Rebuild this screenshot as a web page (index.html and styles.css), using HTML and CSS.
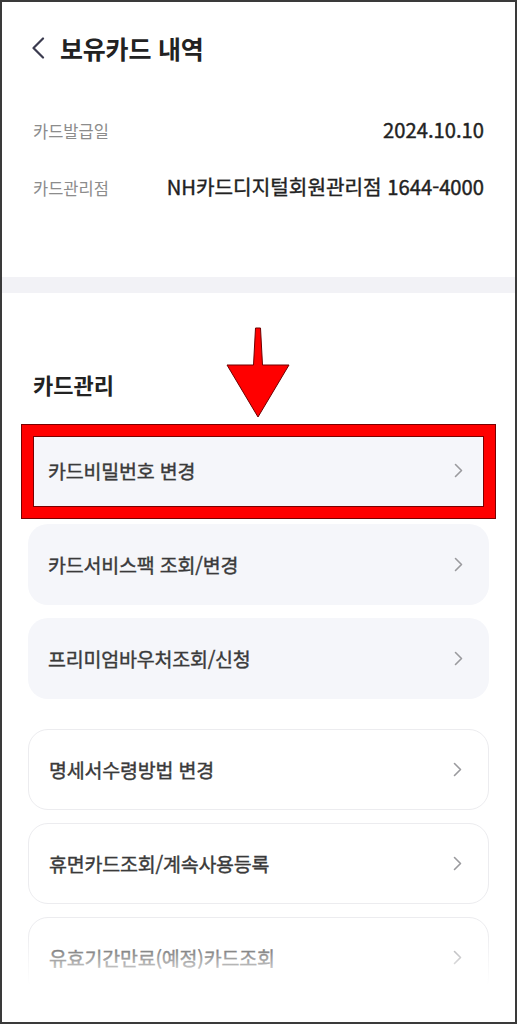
FILE: index.html
```html
<!DOCTYPE html>
<html lang="ko">
<head>
<meta charset="utf-8">
<title>보유카드 내역</title>
<link rel="stylesheet" href="styles.css">
</head>
<body>
<div class="frame">
  <header class="header">
    <svg class="back" width="14" height="22" viewBox="0 0 14 22"><polyline points="12,1.5 2.5,11 12,20.5" fill="none" stroke="#3b3b4f" stroke-width="2.2" stroke-linecap="round" stroke-linejoin="round"/></svg>
    <h1 class="title">보유카드 내역</h1>
  </header>

  <section class="info">
    <div class="info-row"><span class="label">카드발급일</span><span class="value">2024.10.10</span></div>
    <div class="info-row"><span class="label">카드관리점</span><span class="value">NH카드디지털회원관리점 1644-4000</span></div>
  </section>

  <div class="band"></div>

  <section class="manage">
    <h2 class="section-title">카드관리</h2>
    <div class="list">
      <div class="group">
        <div class="item filled highlighted"><span>카드비밀번호 변경</span><svg class="chev" width="9" height="15" viewBox="0 0 9 15"><polyline points="1.5,1.5 7.5,7.5 1.5,13.5" fill="none" stroke="#9a9a9e" stroke-width="1.6" stroke-linecap="round" stroke-linejoin="round"/></svg><div class="redbox"></div></div>
        <div class="item filled"><span>카드서비스팩 조회/변경</span><svg class="chev" width="9" height="15" viewBox="0 0 9 15"><polyline points="1.5,1.5 7.5,7.5 1.5,13.5" fill="none" stroke="#9a9a9e" stroke-width="1.6" stroke-linecap="round" stroke-linejoin="round"/></svg></div>
        <div class="item filled"><span>프리미엄바우처조회/신청</span><svg class="chev" width="9" height="15" viewBox="0 0 9 15"><polyline points="1.5,1.5 7.5,7.5 1.5,13.5" fill="none" stroke="#9a9a9e" stroke-width="1.6" stroke-linecap="round" stroke-linejoin="round"/></svg></div>
      </div>
      <div class="group">
        <div class="item outlined"><span>명세서수령방법 변경</span><svg class="chev" width="9" height="15" viewBox="0 0 9 15"><polyline points="1.5,1.5 7.5,7.5 1.5,13.5" fill="none" stroke="#9a9a9e" stroke-width="1.6" stroke-linecap="round" stroke-linejoin="round"/></svg></div>
        <div class="item outlined"><span>휴면카드조회/계속사용등록</span><svg class="chev" width="9" height="15" viewBox="0 0 9 15"><polyline points="1.5,1.5 7.5,7.5 1.5,13.5" fill="none" stroke="#9a9a9e" stroke-width="1.6" stroke-linecap="round" stroke-linejoin="round"/></svg></div>
        <div class="item outlined"><span>유효기간만료(예정)카드조회</span><svg class="chev" width="9" height="15" viewBox="0 0 9 15"><polyline points="1.5,1.5 7.5,7.5 1.5,13.5" fill="none" stroke="#9a9a9e" stroke-width="1.6" stroke-linecap="round" stroke-linejoin="round"/></svg></div>
      </div>
      <div class="fade"></div>
    </div>
  </section>

  <svg class="arrow" width="66" height="94" viewBox="0 0 66 94"><polygon points="30.5,2 35.5,2 37.5,39 64,39 33,91 2,39 28.5,39" fill="#ff0000" stroke="#6e0000" stroke-width="1" stroke-linejoin="miter"/></svg>
</div>
</body>
</html>
```

FILE: styles.css
```css
* { box-sizing: border-box; margin: 0; padding: 0; }

html, body {
  background: #ffffff;
}

body {
  margin: 0;
  font-family: "Noto Sans CJK KR", "Noto Sans", sans-serif;
  color: #222;
}

.frame {
  position: relative;
  width: 517px;
  height: 1024px;
  border: 2px solid #3a3a3a;
  overflow: hidden;
  background: #fff;
}

.header {
  display: flex;
  align-items: center;
  gap: 15px;
  padding: 30px 0 0 29px;
  height: 62px;
}

.back { display: block; flex: none; }

.title {
  font-size: 25px;
  font-weight: 700;
  line-height: 32px;
  color: #222;
  letter-spacing: -0.2px;
}

.info {
  display: flex;
  flex-direction: column;
  gap: 29px;
  padding: 52px 31px 76px 31px;
}

.info-row {
  display: flex;
  justify-content: space-between;
  align-items: baseline;
  height: 28px;
  line-height: 28px;
}

.label {
  font-size: 16.5px;
  color: #8c8c8c;
}

.value {
  font-size: 20.2px;
  font-weight: 400;
  color: #222;
  -webkit-text-stroke: 0.4px #222;
}

.band {
  height: 16px;
  background: #f2f2f6;
}

.manage {
  padding: 77px 26px 0 26px;
}

.section-title {
  font-size: 22px;
  font-weight: 700;
  line-height: 28px;
  padding-left: 5px;
  color: #222;
}

.list {
  position: relative;
  margin-top: 32px;
  display: flex;
  flex-direction: column;
  gap: 30px;
}

.group {
  display: flex;
  flex-direction: column;
  gap: 13px;
}

.item {
  position: relative;
  height: 81px;
  border-radius: 20px;
  display: flex;
  align-items: center;
  justify-content: space-between;
  padding: 0 26px 0 20px;
  font-size: 19.5px;
  font-weight: 400;
  color: #3a3a3a;
  -webkit-text-stroke: 0.4px #3a3a3a;
  letter-spacing: -0.2px;
}

.item.filled {
  background: #f5f6fa;
}

.item.outlined {
  background: #fff;
  border: 1px solid #ececef;
}

.chev { display: block; flex: none; }

.redbox {
  position: absolute;
  top: -5px;
  left: -6px;
  right: -6px;
  bottom: -7px;
  border: 11px solid #ff0000;
  box-shadow: 0 0 0 1px #7a0000, inset 0 0 0 1px #7a0000;
}

.fade {
  position: absolute;
  left: -10px;
  right: -10px;
  top: 500px;
  height: 200px;
  background: linear-gradient(to bottom, rgba(255,255,255,0) 0px, rgba(255,255,255,1) 55px, #fff 100%);
}

.arrow {
  position: absolute;
  left: 223px;
  top: 324px;
}
```
